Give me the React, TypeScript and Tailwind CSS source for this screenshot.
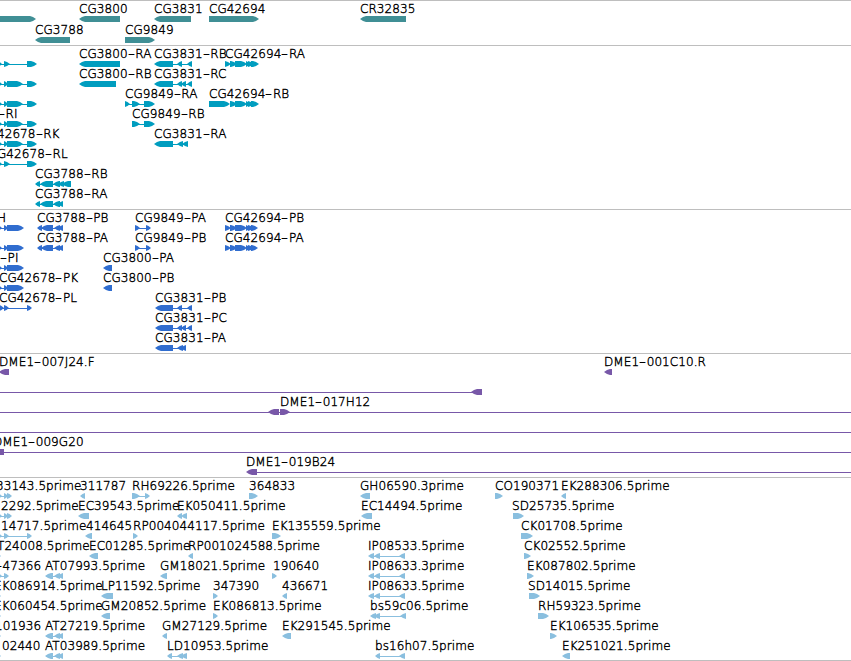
import React from 'react';
import clsx from 'clsx';

type Direction = 'L' | 'R' | 'N';
type Block = [start: number, end: number, direction: Direction];

interface Feature {
  label?: string;
  x?: number;
  line?: [number, number];
  blocks?: Block[];
}

interface Track {
  id: string;
  color: string;
  className: string;
  rowClassName: string;
  rows: Feature[][];
}

// Shorthand for a list of blocks that point the same way
const left = (...spans: [number, number][]): Block[] => spans.map(([a, b]) => [a, b, 'L']);
const right = (...spans: [number, number][]): Block[] => spans.map(([a, b]) => [a, b, 'R']);

const shortExons: Feature = { line: [0, 28], blocks: right([-3, 2], [4, 10], [27, 37]) };
const longExons: Feature = { line: [0, 28], blocks: right([-3, 2], [4, 8], [7, 23], [27, 37]) };
const codingExons: Feature = { line: [0, 8], blocks: right([-3, 2], [4, 8], [7, 24]) };
const estStart: Feature = { line: [0, 8], blocks: right([-3, 2], [4, 8], [7, 12]) };
const edge: Feature = { blocks: right([-4, 1]) };

const geneTrack: Feature[][] = [
  [
    { blocks: right([-10, 36]) },
    { label: 'CG3800', x: 79, blocks: left([79, 120]) },
    { label: 'CG3831', x: 154, blocks: left([154, 191]) },
    { label: 'CG42694', x: 209, blocks: right([209, 259]) },
    { label: 'CR32835', x: 360, blocks: left([360, 406]) },
  ],
  [
    { label: 'CG3788', x: 35, blocks: left([35, 70]) },
    { label: 'CG9849', x: 125, blocks: right([125, 155]) },
  ],
];

const transcriptTrack: Feature[][] = [
  [
    shortExons,
    { label: 'CG3800-RA', x: 79, blocks: left([79, 120]) },
    { label: 'CG3831-RB', x: 154, line: [172, 190], blocks: left([154, 173], [177, 182], [187, 192]) },
    { label: 'CG42694-RA', x: 225, blocks: right([225, 231], [230, 237], [235, 247], [246, 250], [248, 254], [251, 259]) },
  ],
  [
    longExons,
    { label: 'CG3800-RB', x: 79, blocks: left([79, 116]) },
    { label: 'CG3831-RC', x: 154, line: [172, 190], blocks: left([154, 173], [177, 182], [181, 186], [187, 192]) },
  ],
  [
    longExons,
    { label: 'CG9849-RA', x: 125, line: [126, 146], blocks: right([125, 130], [132, 140], [144, 155]) },
    {
      label: 'CG42694-RB',
      x: 209,
      blocks: right([209, 230], [230, 237], [235, 247], [246, 250], [248, 254], [251, 259]),
    },
  ],
  [
    longExons,
    { label: '-RI', x: -2 },
    { label: 'CG9849-RB', x: 132, line: [134, 146], blocks: right([132, 140], [144, 155]) },
  ],
  [
    longExons,
    { label: '42678-RK', x: -3 },
    { label: 'CG3831-RA', x: 154, line: [172, 187], blocks: left([154, 173], [177, 183], [182, 188]) },
  ],
  [shortExons, { label: 'G42678-RL', x: -3 }],
  [{ label: 'CG3788-RB', x: 35, line: [36, 68], blocks: left([35, 40], [40, 53], [53, 60], [58, 64], [62, 71]) }],
  [{ label: 'CG3788-RA', x: 35, line: [36, 60], blocks: left([35, 40], [40, 53], [53, 60], [58, 63]) }],
];

const proteinTrack: Feature[][] = [
  [
    codingExons,
    { label: 'H', x: -3 },
    { label: 'CG3788-PB', x: 37, line: [38, 62], blocks: left([37, 42], [41, 53], [54, 60], [58, 63]) },
    { label: 'CG9849-PA', x: 135, line: [136, 150], blocks: right([135, 140], [146, 151]) },
    { label: 'CG42694-PB', x: 225, blocks: right([225, 231], [230, 237], [235, 247], [246, 250], [248, 254], [251, 258]) },
  ],
  [
    codingExons,
    { label: 'CG3788-PA', x: 37, line: [38, 62], blocks: left([37, 42], [41, 53], [54, 60], [58, 63]) },
    { label: 'CG9849-PB', x: 135, line: [136, 150], blocks: right([135, 140], [146, 151]) },
    { label: 'CG42694-PA', x: 225, blocks: right([225, 231], [230, 237], [235, 247], [246, 250], [248, 254], [251, 258]) },
  ],
  [
    codingExons,
    { label: '-PI', x: 0 },
    { label: 'CG3800-PA', x: 103, blocks: left([103, 112]) },
  ],
  [
    codingExons,
    { label: 'CG42678-PK', x: -1 },
    { label: 'CG3800-PB', x: 103, blocks: left([103, 112]) },
  ],
  [
    { label: 'CG42678-PL', x: -1, line: [0, 30], blocks: right([-1, 4], [4, 9], [27, 32]) },
    { label: 'CG3831-PB', x: 155, line: [172, 190], blocks: left([155, 173], [177, 182], [187, 192]) },
  ],
  [{ label: 'CG3831-PC', x: 155, line: [172, 190], blocks: left([155, 173], [177, 182], [181, 186], [187, 192]) }],
  [{ label: 'CG3831-PA', x: 155, line: [172, 185], blocks: left([155, 173], [177, 183], [181, 186]) }],
];

const bacTrack: Feature[][] = [
  [
    { label: 'DME1-007J24.F', x: -1, blocks: left([-1, 9]) },
    { label: 'DME1-001C10.R', x: 604, blocks: left([604, 612]) },
  ],
  [{ line: [0, 474], blocks: left([471, 482]) }],
  [{ label: 'DME1-017H12', x: 280, line: [0, 851], blocks: [[268, 279, 'L'], [280, 290, 'R']] }],
  [{ line: [0, 851] }],
  [{ label: 'DME1-009G20', x: -7, line: [0, 851], blocks: [[-2, 4, 'N']] }],
  [{ label: 'DME1-019B24', x: 246, line: [250, 851], blocks: left([246, 257]) }],
];

const estTrack: Feature[][] = [
  [
    { ...estStart, label: '33143.5prime', x: -4 },
    { label: '311787', x: 80, blocks: left([80, 85]) },
    { label: 'RH69226.5prime', x: 132, line: [134, 148], blocks: right([132, 140], [145, 150]) },
    { label: '364833', x: 249, blocks: right([249, 258]) },
    { label: 'GH06590.3prime', x: 360, blocks: left([360, 370]) },
    { label: 'CO190371', x: 495, blocks: right([495, 503]) },
    { label: 'EK288306.5prime', x: 561, blocks: left([561, 566]) },
  ],
  [
    { ...estStart, label: '2292.5prime', x: 1 },
    { label: 'EC39543.5prime', x: 78, blocks: left([78, 89]) },
    { label: 'EK050411.5prime', x: 177, blocks: left([177, 182], [181, 187]) },
    { label: 'EC14494.5prime', x: 361, blocks: left([361, 372]) },
    { label: 'SD25735.5prime', x: 512, blocks: right([513, 524]) },
  ],
  [
    { label: '14717.5prime', x: 1, line: [0, 30], blocks: right([-3, 2], [4, 9], [27, 32]) },
    { label: '414645', x: 86, blocks: left([85, 92]) },
    { label: 'RP004044117.5prime', x: 133, blocks: right([133, 138]) },
    { label: 'EK135559.5prime', x: 272, blocks: right([272, 281]) },
    { label: 'CK01708.5prime', x: 521, blocks: right([521, 533]) },
  ],
  [
    { ...edge, label: 'T24008.5prime', x: -3 },
    { label: 'EC01285.5prime', x: 89, blocks: left([89, 98]) },
    { label: 'RP001024588.5prime', x: 188, blocks: left([188, 193]) },
    { label: 'IP08533.5prime', x: 368, line: [370, 403], blocks: left([368, 374], [374, 380], [399, 405]) },
    { label: 'CK02552.5prime', x: 524, blocks: right([524, 531]) },
  ],
  [
    { label: '-47366', x: -5, line: [0, 6], blocks: right([-3, 2], [4, 9]) },
    { label: 'AT07993.5prime', x: 45, line: [46, 62], blocks: left([45, 53], [54, 60], [58, 63]) },
    { label: 'GM18021.5prime', x: 160, blocks: left([160, 167]) },
    { label: '190640', x: 273, blocks: right([272, 277]) },
    { label: 'IP08633.3prime', x: 368, line: [370, 403], blocks: left([368, 374], [374, 380], [399, 405]) },
    { label: 'EK087802.5prime', x: 527, blocks: right([527, 534]) },
  ],
  [
    { ...edge, label: 'EK086914.5prime', x: -6 },
    { label: 'LP11592.5prime', x: 101, blocks: left([101, 113]) },
    { label: '347390', x: 213, blocks: right([213, 218]) },
    { label: '436671', x: 282, blocks: left([282, 287]) },
    { label: 'IP08633.5prime', x: 368, line: [370, 403], blocks: left([368, 374], [374, 380], [399, 405]) },
    { label: 'SD14015.5prime', x: 528, blocks: right([529, 540]) },
  ],
  [
    { ...edge, label: 'EK060454.5prime', x: -6 },
    { label: 'GM20852.5prime', x: 101, blocks: left([101, 110]) },
    { label: 'EK086813.5prime', x: 213, blocks: right([213, 218]) },
    { label: 'bs59c06.5prime', x: 370, line: [372, 404], blocks: left([370, 376], [374, 380], [400, 406]) },
    { label: 'RH59323.5prime', x: 538, blocks: right([538, 549]) },
  ],
  [
    { ...edge, label: '101936', x: -5 },
    { label: 'AT27219.5prime', x: 45, line: [46, 62], blocks: left([45, 53], [54, 60], [58, 63]) },
    { label: 'GM27129.5prime', x: 162, blocks: left([162, 167]) },
    { label: 'EK291545.5prime', x: 282, blocks: left([282, 291]) },
    { label: 'EK106535.5prime', x: 550, blocks: right([550, 557]) },
  ],
  [
    { ...edge, label: '02440', x: 2 },
    { label: 'AT03989.5prime', x: 45, line: [46, 62], blocks: left([45, 53], [54, 60], [58, 63]) },
    { label: 'LD10953.5prime', x: 167, line: [168, 186], blocks: left([167, 172], [177, 183], [181, 187]) },
    { label: 'bs16h07.5prime', x: 375, line: [376, 403], blocks: left([375, 380], [399, 405]) },
    { label: 'EK251021.5prime', x: 562, blocks: left([562, 570]) },
  ],
];

const tracks: Track[] = [
  { id: 'genes', color: '#408f95', className: 'h-[45px]', rowClassName: 'h-[21px]', rows: geneTrack },
  { id: 'transcripts', color: '#009dbf', className: 'h-[164px]', rowClassName: 'h-5', rows: transcriptTrack },
  { id: 'proteins', color: '#306dcf', className: 'h-[144px]', rowClassName: 'h-5', rows: proteinTrack },
  { id: 'bacs', color: '#7858a8', className: 'h-[124px]', rowClassName: 'h-5', rows: bacTrack },
  { id: 'ests', color: '#8abfdf', className: 'h-[183px]', rowClassName: 'h-5', rows: estTrack },
];

function blockPoints([start, end, direction]: Block) {
  if (direction === 'N') {
    return `${start},0 ${end},0 ${end},6 ${start},6`;
  }
  const head = Math.min(end - start, 6);
  const tip = direction === 'L' ? start : end;
  const tail = direction === 'L' ? end : start;
  const step = direction === 'L' ? 1 : -1;
  const mid = tip + step * head * 0.5;
  const neck = tip + step * head;
  return `${tip},3 ${mid},0.9 ${neck},0 ${tail},0 ${tail},6 ${neck},6 ${mid},5.1`;
}

function FeatureGlyph({ line, blocks = [] }: Feature) {
  return (
    <g>
      {line && <rect x={line[0]} y={3} width={line[1] - line[0]} height={1} shapeRendering="crispEdges" />}
      {blocks.map((block) => (
        <polygon key={block.join('-')} points={blockPoints(block)} />
      ))}
    </g>
  );
}

function FeatureLabel({ label, x }: { label: string; x?: number }) {
  const [name, suffix] = label.split('-');

  return (
    <span className="absolute -top-0.5 leading-4 tracking-[0.07px] whitespace-pre" style={{ left: x }}>
      {name}
      {suffix && (
        <>
          {/* the dash is drawn wider than the font's own hyphen */}
          <span className="inline-block w-[7.6px] origin-left scale-x-[1.6]">-</span>
          {suffix}
        </>
      )}
    </span>
  );
}

function TrackRow({ features, color, className }: { features: Feature[]; color: string; className: string }) {
  return (
    <div className={clsx('relative w-full', className)}>
      {features.map(({ label, x }) => label && <FeatureLabel key={label} label={label} x={x} />)}
      <svg className="absolute top-[13px] left-0" width={851} height={6} fill={color}>
        {features.map((feature, i) => (
          <FeatureGlyph key={i} {...feature} />
        ))}
      </svg>
    </div>
  );
}

export default function App() {
  return (
    <main className="flex h-[661px] w-[851px] flex-col overflow-hidden border-b border-[#bebebe] bg-white font-['DejaVu_Sans',sans-serif] text-[12px] font-extralight text-black [-webkit-text-stroke:0.4px_black]">
      {tracks.map((track) => (
        <section key={track.id} className={clsx('shrink-0 border-t border-[#bebebe] pt-0.5', track.className)}>
          {track.rows.map((features, i) => (
            <TrackRow key={i} features={features} color={track.color} className={track.rowClassName} />
          ))}
        </section>
      ))}
    </main>
  );
}
